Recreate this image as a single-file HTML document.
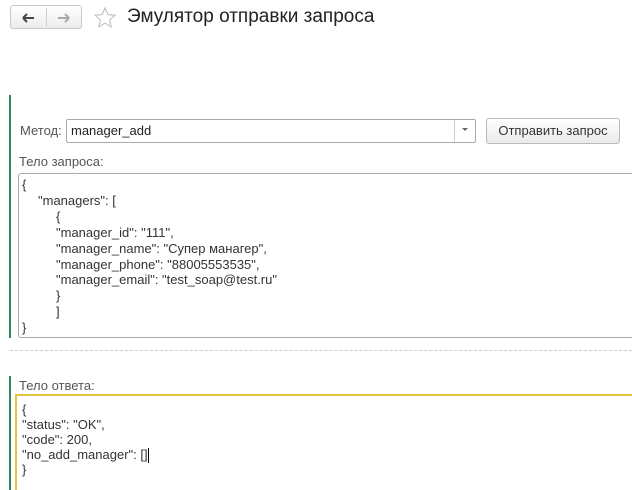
<!DOCTYPE html>
<html style="width:632px;height:490px;overflow:hidden"><head><meta charset="utf-8"><style>
*{margin:0;padding:0;box-sizing:border-box}
body{width:632px;height:490px;overflow:hidden;background:#fff;font-family:"Liberation Sans",Arial,sans-serif;color:#333;position:relative}
.a{position:absolute}
.nav{left:10px;top:5px;width:72px;height:24px;border:1px solid #c8c8c8;border-radius:3px;background:linear-gradient(#fff,#ececec)}
.nav .d{position:absolute;left:35px;top:2px;width:1px;height:19px;background:#d0d0d0}
.t{font-size:13px;letter-spacing:0;white-space:pre}
</style></head><body>
<div class="a nav"><div class="d"></div>
<svg class="a" style="left:10px;top:6px" width="16" height="12"><path d="M2 6h11M2 6l4-4M2 6l4 4" stroke="#444" stroke-width="2" fill="none"/></svg>
<svg class="a" style="left:45px;top:6px" width="16" height="12"><path d="M13 6H2M13 6l-4-4M13 6l-4 4" stroke="#aaa" stroke-width="2" fill="none"/></svg>
</div>
<svg class="a" style="left:94px;top:7px" width="22" height="22"><path d="M11 1l2.9 6.6 7.1.6-5.4 4.7 1.6 7-6.2-3.7-6.2 3.7 1.6-7L1 8.2l7.1-.6z" fill="none" stroke="#bbb" stroke-width="1"/></svg>
<div class="a" style="left:127px;top:6px;font-size:19px;color:#222;letter-spacing:0">Эмулятор отправки запроса</div>

<div class="a" style="left:9px;top:95px;width:2px;height:243px;background:#2e8b57"></div>
<div class="a" style="left:20px;top:123px;font-size:13px;color:#555">Метод:</div>
<div class="a" style="left:66px;top:119px;width:410px;height:24px;border:1px solid #aaa;border-radius:2px"></div>
<div class="a" style="left:454px;top:120px;width:1px;height:22px;background:#ccc"></div>
<div class="a" style="left:462px;top:128px;width:0;height:0;border-left:3px solid transparent;border-right:3px solid transparent;border-top:3px solid #666"></div>
<div class="a" style="left:71px;top:123px;font-size:13px;color:#222">manager_add</div>
<div class="a" style="left:486px;top:118px;width:134px;height:26px;border:1px solid #bbb;border-radius:3px;background:linear-gradient(#fff,#eaeaea);font-size:13px;text-align:center;line-height:24px;color:#333">Отправить запрос</div>
<div class="a" style="left:19px;top:154px;font-size:13px;color:#555">Тело запроса:</div>
<div class="a" style="left:18px;top:173px;width:620px;height:165px;border:1px solid #aaa;border-radius:3px"></div>
<div class="a t" style="left:22px;top:177px;line-height:15.9px">{<br><span style="padding-left:16px">"managers": [</span><br><span style="padding-left:34px">{</span><br><span style="padding-left:34px">"manager_id": "111",</span><br><span style="padding-left:34px">"manager_name": "Супер манагер",</span><br><span style="padding-left:34px">"manager_phone": "88005553535",</span><br><span style="padding-left:34px">"manager_email": "test_soap@test.ru"</span><br><span style="padding-left:34px">}</span><br><span style="padding-left:34px">]</span><br>}</div>
<div class="a" style="left:10px;top:350px;width:622px;border-top:1px dashed #ccc"></div>
<div class="a" style="left:9px;top:376px;width:2px;height:114px;background:#2e8b57"></div>
<div class="a" style="left:19px;top:378px;font-size:13px;color:#555">Тело ответа:</div>
<div class="a" style="left:15px;top:394px;width:617px;height:96px;border:2px solid #e8c33c;border-right:none;border-bottom:none"></div>
<div class="a t" style="left:22px;top:402px;line-height:15px">{
"status": "OK",
"code": 200,
"no_add_manager": []
}</div>
<div class="a" style="left:148px;top:448px;width:1px;height:15px;background:#000"></div>
</body></html>
